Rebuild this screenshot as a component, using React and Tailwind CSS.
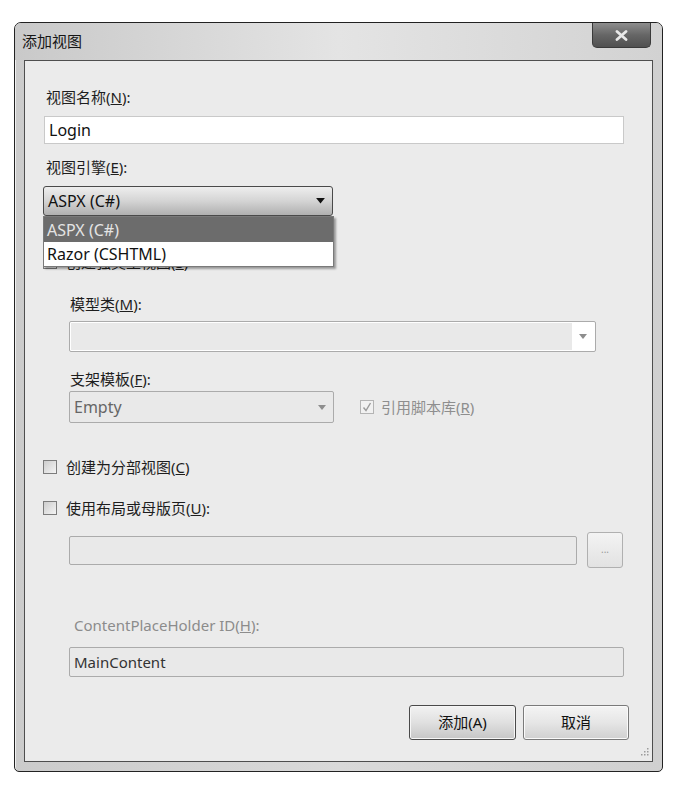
const font = "font-['Noto_Sans','Noto_Sans_CJK_SC',sans-serif]";

function Arrow({ color = "#111", size = 9 }) {
  return (
    <svg width={size} height={size / 2 + 1} viewBox="0 0 8 5">
      <path d="M0 0 L8 0 L4 5 Z" fill={color} />
    </svg>
  );
}

function Checkbox({ checked = false, disabled = false }) {
  return (
    <div
      className={`w-[14px] h-[14px] border flex items-center justify-center ${
        disabled ? "border-[#b4b4b4] bg-[#f1f1f1]" : "border-[#7c7c7c] bg-linear-to-br from-[#cdcdcd] to-[#f4f4f4]"
      }`}
    >
      {checked && (
        <svg width="10" height="10" viewBox="0 0 10 10">
          <path d="M1.5 5.5 L4 8.5 L8.5 1" stroke="#9a9a9a" strokeWidth="1.4" fill="none" />
        </svg>
      )}
    </div>
  );
}

function Label({ children, className = "" }) {
  return <div className={`h-[20px] leading-[20px] text-[15px] text-[#1e1e1e] ${className}`}>{children}</div>;
}

export default function App() {
  return (
    <div className={`w-[674px] h-[786px] bg-white pt-[22px] pl-[14px] ${font}`}>
      <div className="relative w-[649px] h-[750px] flex flex-col rounded-t-[7px] rounded-b-[5px] border border-[#222] bg-linear-to-r from-[#cbcbcb] via-[#d9d9d9] to-[#d0d0d0] shadow-[inset_1px_1px_0_#f0f0f0]">
        {/* title bar */}
        <div className="h-[37px] flex items-center pl-[7px] bg-linear-to-r from-[#c9c9c9] via-[#e4e4e4] to-[#d2d2d2] rounded-t-[6px]">
          <span className="text-[15px] text-[#161616]">添加视图</span>
        </div>
        <div className="absolute right-[11px] top-0 w-[59px] h-[25px] rounded-b-[5px] border border-[#3a3a3a] border-t-0 bg-linear-to-b from-[#8e8e8e] via-[#666] to-[#505050] flex items-center justify-center">
          <svg width="13" height="11" viewBox="0 0 13 11">
            <path d="M2 1.5 L11 9.5 M11 1.5 L2 9.5" stroke="#e8e8e8" strokeWidth="2.8" strokeLinecap="round" />
          </svg>
        </div>

        {/* client area */}
        <div className="relative flex-1 mx-[9px] mb-[9px] border border-[#4e4e4e] bg-[#ebebeb] flex flex-col">
          <Label className="mt-[26px] ml-[21px]">
            视图名称(<u>N</u>):
          </Label>
          <div className="mt-[9px] ml-[19px] w-[580px] h-[28px] bg-white border border-[#c9c9c9] flex items-center pl-[4px] text-[16px] text-[#111]">
            Login
          </div>
          <Label className="mt-[13px] ml-[21px]">
            视图引擎(<u>E</u>):
          </Label>

          <div className="relative mt-[9px] ml-[18px] w-[290px] h-[30px]">
            <div className="h-full rounded-[3px] border border-[#4a4a4a] bg-linear-to-b from-[#eeeeee] via-[#d4d4d4] to-[#b0b0b0] flex items-center justify-between pl-[4px] pr-[7px] text-[16px] text-[#111]">
              <span>ASPX (C#)</span>
              <Arrow />
            </div>
            {/* open dropdown list */}
            <div className="absolute z-10 top-[30px] left-0 w-[291px] border border-[#7a7a7a] bg-white shadow-[2px_2px_2px_rgba(0,0,0,0.35)] text-[16px]">
              <div className="h-[25px] bg-[#6c6c6c] text-[#e4e4e4] flex items-center pl-[3px]">ASPX (C#)</div>
              <div className="h-[24px] text-[#111] flex items-center pl-[3px]">Razor (CSHTML)</div>
            </div>
          </div>

          {/* strongly typed view (mostly hidden behind list) */}
          <div className="mt-[36px] ml-[18px] h-[20px] flex items-center gap-[9px]">
            <Checkbox />
            <span className="text-[15px] text-[#1e1e1e]">
              创建强类型视图(<u>S</u>)
            </span>
          </div>

          <Label className="mt-[22px] ml-[45px]">
            模型类(<u>M</u>):
          </Label>
          <div className="mt-[7px] ml-[44px] w-[527px] h-[31px] border border-[#ababab] rounded-[2px] bg-white p-[1px] flex">
            <div className="flex-1 bg-[#e9e9e9]" />
            <div className="w-[22px] flex items-center justify-center">
              <Arrow color="#8d8d8d" size={8} />
            </div>
          </div>

          <Label className="mt-[17px] ml-[45px]">
            支架模板(<u>F</u>):
          </Label>
          <div className="mt-[2px] ml-[44px] flex items-center">
            <div className="w-[265px] h-[32px] border border-[#ababab] rounded-[2px] bg-[#e9e9e9] flex items-center justify-between pl-[4px] pr-[7px] text-[16px] text-[#666]">
              <span>Empty</span>
              <Arrow color="#8d8d8d" size={8} />
            </div>
            <div className="ml-[26px] flex items-center gap-[7px]">
              <Checkbox checked disabled />
              <span className="text-[15px] text-[#8e8e8e]">
                引用脚本库(<u>R</u>)
              </span>
            </div>
          </div>

          <div className="mt-[34px] ml-[18px] h-[20px] flex items-center gap-[9px]">
            <Checkbox />
            <span className="text-[15px] text-[#1e1e1e]">
              创建为分部视图(<u>C</u>)
            </span>
          </div>
          <div className="mt-[21px] ml-[18px] h-[20px] flex items-center gap-[9px]">
            <Checkbox />
            <span className="text-[15px] text-[#1e1e1e]">
              使用布局或母版页(<u>U</u>):
            </span>
          </div>

          <div className="mt-[14px] ml-[44px] h-[36px] flex items-center gap-[10px]">
            <div className="w-[508px] h-[29px] border border-[#ababab] rounded-[2px] bg-[#e9e9e9]" />
            <div className="w-[36px] h-[36px] border border-[#b0b0b0] rounded-[3px] bg-linear-to-b from-[#f3f3f3] to-[#e2e2e2] flex items-center justify-center text-[10px] text-[#9a9a9a] leading-none pb-[2px]">
              ...
            </div>
          </div>

          <Label className="mt-[47px] ml-[49px] !text-[#8c8c8c]">
            ContentPlaceHolder ID(<u>H</u>):
          </Label>
          <div className="mt-[12px] ml-[44px] w-[555px] h-[30px] border border-[#ababab] rounded-[2px] bg-[#e9e9e9] flex items-center pl-[4px] text-[15px] text-[#333]">
            MainContent
          </div>

          <div className="mt-[28px] pr-[23px] flex justify-end gap-[7px]">
            <div className="w-[107px] h-[35px] rounded-[3px] border border-[#4a4a4a] bg-linear-to-b from-[#f2f2f2] via-[#e0e0e0] to-[#c6c6c6] flex items-center justify-center text-[15px] text-[#111] shadow-[inset_0_0_0_1px_#f6f6f6]">
              添加(A)
            </div>
            <div className="w-[106px] h-[35px] rounded-[3px] border border-[#7a7a7a] bg-linear-to-b from-[#f4f4f4] via-[#e6e6e6] to-[#d0d0d0] flex items-center justify-center text-[15px] text-[#111] shadow-[inset_0_0_0_1px_#fafafa]">
              取消
            </div>
          </div>

          {/* resize grip */}
          <svg className="absolute right-[3px] bottom-[3px]" width="10" height="10" viewBox="0 0 10 10">
            <g fill="#9c9c9c">
              <rect x="8" y="0" width="1.5" height="1.5" />
              <rect x="5" y="3" width="1.5" height="1.5" />
              <rect x="8" y="3" width="1.5" height="1.5" />
              <rect x="2" y="6" width="1.5" height="1.5" />
              <rect x="5" y="6" width="1.5" height="1.5" />
              <rect x="8" y="6" width="1.5" height="1.5" />
            </g>
          </svg>
        </div>
      </div>
    </div>
  );
}
